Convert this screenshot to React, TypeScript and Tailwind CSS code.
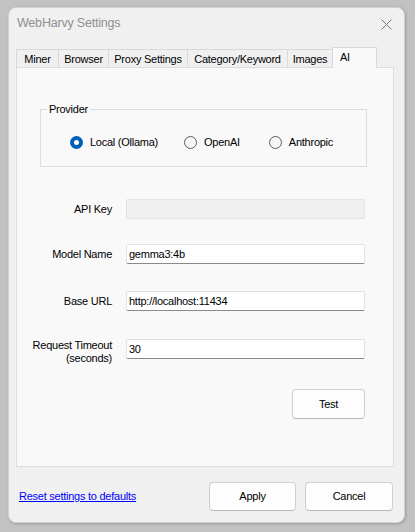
import { useState } from 'react';

const font = { fontFamily: '"Liberation Sans", Arial, sans-serif' };

const tabs = ['Miner', 'Browser', 'Proxy Settings', 'Category/Keyword', 'Images', 'AI'];
const tabWidths = ['w-[42px]', 'w-[50px]', 'w-[79px]', 'w-[100px]', 'w-[45px]', 'w-[45px]'];

function Radio({ checked, label, onClick, className }: { checked: boolean; label: string; onClick: () => void; className?: string }) {
  return (
    <button type="button" onClick={onClick} className={`flex items-center gap-[7px] ${className ?? ''}`}>
      {checked ? (
        <span className="flex h-[13px] w-[13px] items-center justify-center rounded-full bg-[#005fb8]">
          <span className="h-[5px] w-[5px] rounded-full bg-white" />
        </span>
      ) : (
        <span className="h-[13px] w-[13px] rounded-full border border-[#5d5d5d] bg-[#f6f6f6]" />
      )}
      <span>{label}</span>
    </button>
  );
}

function Field({ label, value, disabled, twoLine }: { label: React.ReactNode; value: string; disabled?: boolean; twoLine?: boolean }) {
  return (
    <div className={`flex ${twoLine ? 'items-start' : 'items-center'}`}>
      <div className="w-[95px] shrink-0 text-right leading-[13px]">{label}</div>
      <input
        readOnly
        disabled={disabled}
        value={value}
        className={`ml-[14px] h-[20px] w-[239px] rounded-[2px] border px-[2px] outline-none ${
          disabled
            ? 'border-[#e4e4e4] bg-[#f0f0f0]'
            : 'border-[#e2e2e2] border-b-[#8a8a8a] bg-white text-black'
        }`}
      />
    </div>
  );
}

export default function App() {
  const [provider, setProvider] = useState('local');

  return (
    <div className="min-h-[532px] w-[415px] bg-[#c2c2c2] pl-[8px] pt-[7px] text-[11px] tracking-[-0.25px] text-black" style={font}>
      {/* window */}
      <div className="flex h-[516px] w-[397px] flex-col rounded-[8px] border border-[#d2d2d2] bg-[#f0f0f0] shadow-[1px_1px_3px_rgba(0,0,0,0.2)]">
        {/* title bar */}
        <div className="flex h-[30px] items-center justify-between pl-[8px] pr-[12px] pt-[1px]">
          <span className="text-[12.5px] tracking-[-0.2px] text-[#8f8f8f]">WebHarvy Settings</span>
          <svg width="11" height="11" viewBox="0 0 11 11" className="mt-[1px]">
            <path d="M0.5 0.5 L10.5 10.5 M10.5 0.5 L0.5 10.5" stroke="#7a7a7a" strokeWidth="1" />
          </svg>
        </div>

        {/* tabs */}
        <div className="ml-[7px] mt-[9px] flex h-[20px] items-end">
          {tabs.map((t, i) =>
            t === 'AI' ? (
              <div
                key={t}
                className={`${tabWidths[i]} relative z-10 -mb-px flex h-[21px] items-start border border-b-0 border-[#d9d9d9] bg-[#f9f9f9] pl-[7px] pt-[1px]`}
              >
                {t}
              </div>
            ) : (
              <div
                key={t}
                className={`${tabWidths[i]} flex h-[18px] items-center justify-center border border-r-0 border-b-0 border-[#d9d9d9] bg-[#f0f0f0] pt-[1px]`}
              >
                {t}
              </div>
            )
          )}
        </div>

        {/* panel */}
        <div className="ml-[7px] h-[400px] w-[378px] border border-[#dcdcdc] bg-[#f9f9f9]">
          {/* group box */}
          <div className="relative ml-[23px] mt-[41px] h-[58px] w-[327px] border border-[#dcdcdc]">
            <span className="absolute -top-[8px] left-[6px] bg-[#f9f9f9] px-[2px] leading-[14px]">Provider</span>
            <div className="flex items-center pl-[29px] pt-[24px]">
              <Radio checked={provider === 'local'} label="Local (Ollama)" onClick={() => setProvider('local')} />
              <Radio checked={provider === 'openai'} label="OpenAI" onClick={() => setProvider('openai')} className="ml-[26px]" />
              <Radio checked={provider === 'anthropic'} label="Anthropic" onClick={() => setProvider('anthropic')} className="ml-[29px]" />
            </div>
          </div>

          <div className="mt-[32px] flex flex-col">
            <Field label="API Key" value="" disabled />
            <div className="mt-[25px]">
              <Field label="Model Name" value="gemma3:4b" />
            </div>
            <div className="mt-[27px]">
              <Field label="Base URL" value="http://localhost:11434" />
            </div>
            <div className="mt-[28px]">
              <Field
                label={
                  <>
                    Request Timeout
                    <br />
                    (seconds)
                  </>
                }
                value="30"
                twoLine
              />
            </div>
          </div>

          <div className="mt-[24px] flex justify-end pr-[28px]">
            <button className="h-[30px] w-[73px] rounded-[4px] border border-[#d0d0d0] border-b-[#b8b8b8] bg-[#fdfdfd]">
              Test
            </button>
          </div>
        </div>

        {/* footer */}
        <div className="mt-[15px] flex items-center pl-[10px] pr-[11px]">
          <a href="#" className="text-[#0000ff] underline">
            Reset settings to defaults
          </a>
          <div className="ml-auto flex gap-[9px]">
            <button className="h-[29px] w-[87px] rounded-[4px] border border-[#d0d0d0] border-b-[#b8b8b8] bg-[#fdfdfd]">
              Apply
            </button>
            <button className="h-[29px] w-[88px] rounded-[4px] border border-[#d0d0d0] border-b-[#b8b8b8] bg-[#fdfdfd]">
              Cancel
            </button>
          </div>
        </div>
      </div>
    </div>
  );
}
